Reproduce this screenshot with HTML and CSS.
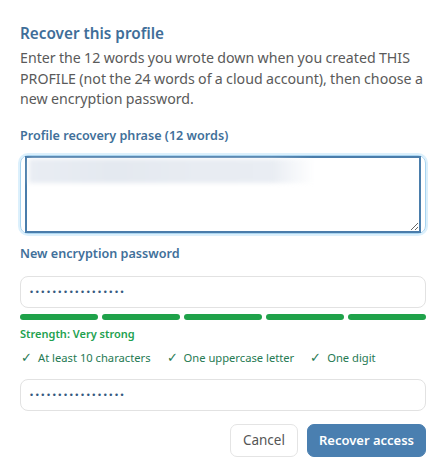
FILE: index.html
```html
<!DOCTYPE html>
<html lang="en">
<head>
<meta charset="utf-8">
<title>Recover this profile</title>
<link rel="stylesheet" href="styles.css">
</head>
<body>
<div class="dialog">
  <h2 class="title">Recover this profile</h2>
  <p class="desc">Enter the 12 words you wrote down when you created THIS PROFILE (not the 24 words of a cloud account), then choose a new encryption password.</p>

  <label class="label" for="phrase">Profile recovery phrase (12 words)</label>
  <div class="phrase-wrap">
    <textarea id="phrase" class="phrase"></textarea>
    <div class="blurred" aria-hidden="true"></div>
  </div>

  <label class="label label-pw" for="pw">New encryption password</label>
  <input id="pw" class="field" type="password" value="abcdefghijklmnopq">
  <div class="bars">
    <span class="bar"></span><span class="bar"></span><span class="bar"></span><span class="bar"></span><span class="bar"></span>
  </div>
  <div class="strength">Strength: Very strong</div>
  <ul class="checks">
    <li><span class="tick">✓</span>At least 10 characters</li>
    <li><span class="tick">✓</span>One uppercase letter</li>
    <li><span class="tick">✓</span>One digit</li>
  </ul>
  <input class="field field-confirm" type="password" value="abcdefghijklmnopq">

  <div class="actions">
    <button class="btn btn-cancel" type="button">Cancel</button>
    <button class="btn btn-primary" type="button">Recover access</button>
  </div>
</div>
</body>
</html>
```

FILE: styles.css
```css
* { box-sizing: border-box; }
html, body { margin: 0; background: #fff; }
body {
  font-family: "Noto Sans", "Open Sans", sans-serif;
  color: #555;
}
.dialog {
  width: 446px;
  padding: 22px 20px 20px;
  display: flex;
  flex-direction: column;
}
.title {
  margin: 0;
  font-size: 15.3px;
  line-height: 22px;
  font-weight: 600;
  color: #3f6e99;
}
.desc {
  margin: 4px 0 0;
  font-size: 14.2px;
  word-spacing: -0.4px;
  line-height: 20.5px;
  color: #5a5a5a;
}
.label {
  display: block;
  margin-top: 16px;
  font-size: 12.6px;
  line-height: 20px;
  font-weight: 600;
  color: #41709a;
}
.phrase-wrap {
  position: relative;
  margin-top: 9px;
  height: 79px;
  border: 1px solid #a8d4f0;
  border-radius: 8px;
  box-shadow: 0 0 0 2px #dcf0fc;
  padding: 0 4px;
  display: flex;
}
.phrase {
  flex: 1;
  margin: 0;
  border: 2px solid #4a7dab;
  border-radius: 0;
  outline: none;
  font: inherit;
  resize: vertical;
  background: transparent;
}
.blurred {
  position: absolute;
  left: 8px;
  top: 3px;
  width: 285px;
  height: 24px;
  background: linear-gradient(90deg, #e9edf3 0%, #e4e9f0 30%, #e8ecf2 60%, #e9edf3 85%, rgba(255,255,255,0) 100%);
  filter: blur(2px);
  pointer-events: none;
}
.label-pw { margin-top: 10px; }
.field {
  margin-top: 12px;
  height: 32px;
  width: 100%;
  border: 1px solid #e2e2e2;
  border-radius: 8px;
  padding: 0 8px;
  font-family: "DejaVu Sans", sans-serif;
  font-size: 8.5px;
  letter-spacing: 0.65px;
  color: #355a80;
  outline: none;
}
.bars {
  margin-top: 6px;
  display: flex;
  gap: 4px;
}
.bar {
  flex: 1;
  height: 6px;
  border-radius: 3px;
  background: #1fa24a;
}
.strength {
  margin-top: 6px;
  font-size: 11px;
  line-height: 16px;
  font-weight: 600;
  color: #22a14f;
}
.checks {
  list-style: none;
  margin: 7px 0 0;
  padding: 0 0 0 1px;
  display: flex;
  gap: 16px;
  font-size: 11.2px;
  line-height: 16px;
  color: #267a53;
}
.tick {
  display: inline-block;
  width: 17px;
  font-size: 13px;
}
.field-confirm { margin-top: 13px; }
.actions {
  margin-top: 13px;
  display: flex;
  justify-content: flex-end;
  gap: 9px;
}
.btn {
  height: 33px;
  border-radius: 7px;
  font-family: inherit;
  font-size: 13px;
  padding: 0 12px;
  cursor: pointer;
}
.btn-cancel {
  background: #fff;
  border: 1px solid #e4e4e4;
  color: #555;
  font-size: 13.5px;
}
.btn-primary {
  background: #4a7fb0;
  border: 1px solid #4a7fb0;
  color: #fff;
  font-weight: 600;
  padding: 0 11px;
}
```
